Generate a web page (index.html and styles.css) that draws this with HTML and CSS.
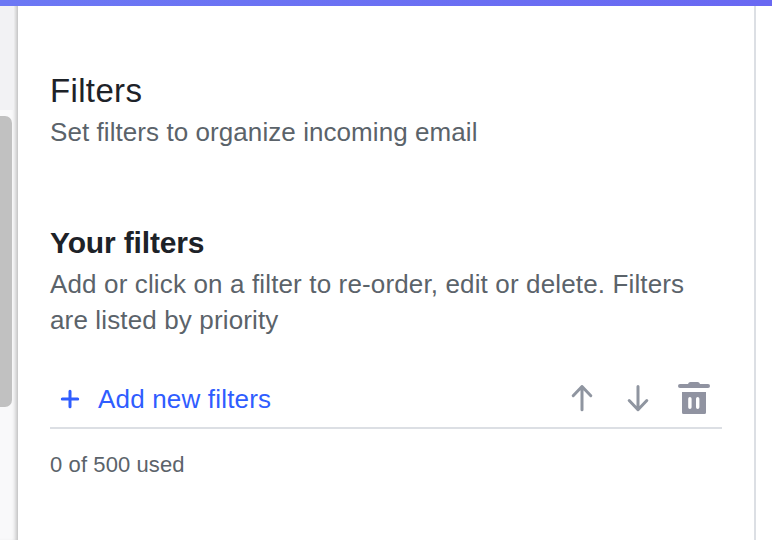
FILE: index.html
```html
<!DOCTYPE html>
<html lang="en">
<head>
    <meta charset="UTF-8">
    <meta name="viewport" content="width=device-width, initial-scale=1.0">
    <link rel="stylesheet" href="styles.css">
    <title>Filters</title>
</head>
<body>
    <div class="topbar"></div>
    <div class="layout">
        <div class="sidebar">
            <div class="sidebar-head"></div>
            <div class="scroll-track">
                <div class="scroll-thumb"></div>
            </div>
        </div>
        <main class="panel">
            <h1>Filters</h1>
            <p class="desc subtitle">Set filters to organize incoming email</p>

            <h2>Your filters</h2>
            <p class="desc">Add or click on a filter to re-order, edit or delete. Filters<br>are listed by priority</p>

            <div class="toolbar">
                <button class="add-button">
                    <svg class="plus" width="20" height="20" viewBox="0 0 20 20">
                        <path d="M10 2.3v15.4M2.3 10h15.4" />
                    </svg>
                    <span>Add new filters</span>
                </button>
                <div class="actions">
                    <button aria-label="Move up">
                        <svg class="arrow" width="24" height="30" viewBox="0 0 24 30">
                            <path d="M12 26.700V3.500M3.200 12.700L12 3.500L20.800 12.700" />
                        </svg>
                    </button>
                    <button class="move-down" aria-label="Move down">
                        <svg class="arrow" width="24" height="30" viewBox="0 0 24 30">
                            <path d="M12 3.500V26.700M3.200 17.500L12 26.700L20.800 17.500" />
                        </svg>
                    </button>
                    <button aria-label="Delete">
                        <svg class="trash" width="32" height="32" viewBox="0 0 32 32">
                            <path d="M10 2Q10.5 0 12.500 0H19.500Q21.500 0 22 2H30a2 2 0 0 1 0 4H2a2 2 0 0 1 0-4Z" />
                            <path fill-rule="evenodd" d="M4 10H28V30.500Q28 32 26.500 32H5.500Q4 32 4 30.500ZM10.200 16.800V25.200a1.700 1.700 0 0 0 3.400 0V16.800a1.700 1.700 0 0 0-3.400 0ZM18 16.800V25.200a1.700 1.700 0 0 0 3.400 0V16.800a1.700 1.700 0 0 0-3.400 0Z" />
                        </svg>
                    </button>
                </div>
            </div>
            <p class="usage">0 of 500 used</p>
        </main>
    </div>
</body>
</html>
```

FILE: styles.css
```css
body {
    font-family: "Liberation Sans", Arial, sans-serif;
    margin: 0;
    height: 100vh;
    display: flex;
    flex-direction: column;
    overflow: hidden;
    background: #fff;
}

.topbar {
    height: 6px;
    flex-shrink: 0;
    background: linear-gradient(90deg, #6c78f4, #6968f2);
}

.layout {
    display: flex;
    flex: 1;
}

.sidebar {
    width: 18px;
    display: flex;
    flex-direction: column;
    flex-shrink: 0;
    background: #f9f9fa;
    box-shadow: inset -5px 0 4px -3px rgba(0, 0, 0, 0.25);
}

.sidebar-head {
    height: 104px;
    margin-right: 4px;
    background: #f2f2f4;
}

.scroll-track {
    padding-top: 6px;
}

.scroll-thumb {
    width: 12px;
    height: 291px;
    border-radius: 0 7px 7px 0;
    background: #c1c1c1;
}

.panel {
    width: 672px;
    padding: 64px 32px 0;
    border-right: 2px solid #dcdfe4;
}

h1 {
    margin: 0 0 2px;
    font-size: 33px;
    font-weight: normal;
    line-height: 42px;
    letter-spacing: 0.35px;
    color: #1d2228;
}

.desc {
    margin: 0;
    font-size: 26px;
    line-height: 36px;
    letter-spacing: 0.14px;
    color: #5b636a;
    white-space: nowrap;
}

.subtitle {
    letter-spacing: 0.07px;
}

h2 {
    margin: 73px 0 3px;
    font-size: 30px;
    line-height: 40px;
    letter-spacing: -0.15px;
    color: #1d2228;
}

.toolbar {
    display: flex;
    justify-content: space-between;
    align-items: center;
    height: 57px;
    margin-top: 29px;
    padding: 3px 12px 0 10px;
    border-bottom: 2px solid #dcdfe4;
}

button {
    display: flex;
    align-items: center;
    padding: 0;
    border: none;
    background: none;
    font-family: inherit;
    cursor: pointer;
}

.add-button {
    gap: 18px;
    padding-top: 1px;
    font-size: 26px;
    letter-spacing: 0.18px;
    color: #2f5dff;
}

.actions {
    display: flex;
    align-items: center;
    gap: 28px;
    padding-bottom: 2px;
}

.move-down {
    margin-left: 4.5px;
}

.plus {
    fill: none;
    stroke: #2f5dff;
    stroke-width: 3;
    stroke-linecap: round;
}

.arrow {
    fill: none;
    stroke: #8f95a0;
    stroke-width: 3;
    stroke-linecap: round;
    stroke-linejoin: round;
}

.trash {
    fill: #9093a1;
}

.usage {
    margin: 20px 0 0;
    font-size: 22px;
    line-height: 32px;
    letter-spacing: 0.1px;
    color: #5b636a;
}
```
